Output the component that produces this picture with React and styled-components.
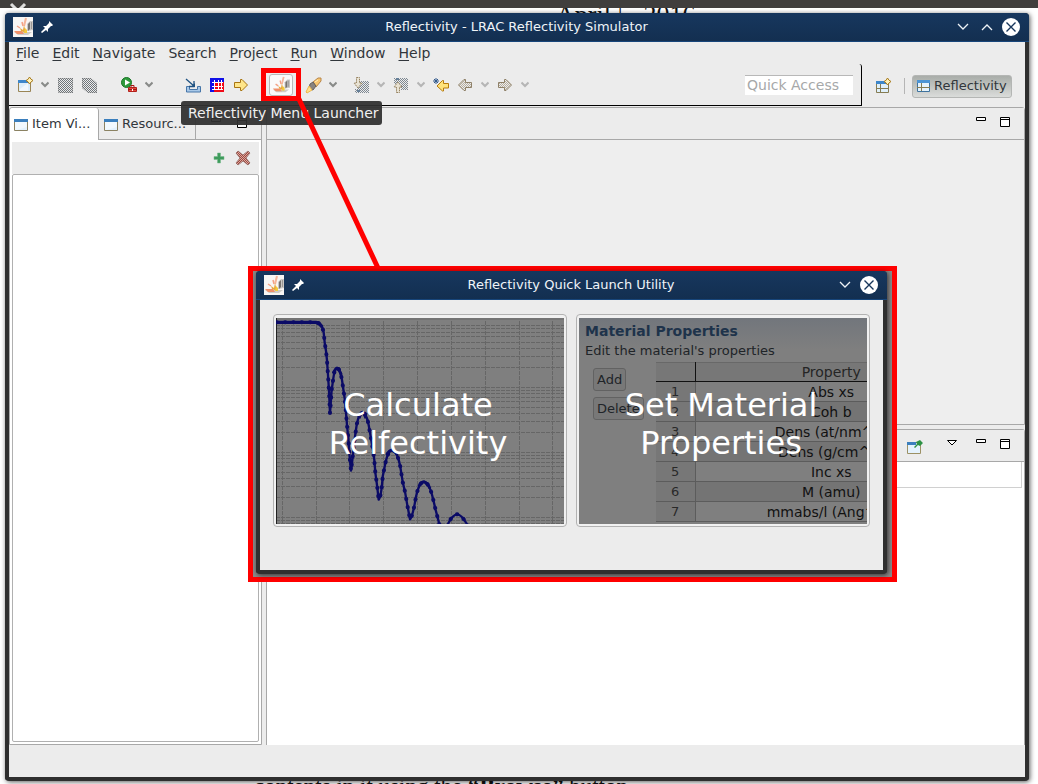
import React from "react";
import styled, { createGlobalStyle, css } from "styled-components";

const GlobalStyle = createGlobalStyle`
  *, *::before, *::after { box-sizing: border-box; }
  body { margin: 0; background: #fff; font-family: "DejaVu Sans", sans-serif; font-size: 13px; line-height: 18px; color: #31363b; }
  button, input, table { font: inherit; color: inherit; margin: 0; }
  button { padding: 0; border: 0; background: none; }
  svg { display: block; flex: none; }
`;

const Desktop = styled.div`
  position: relative;
  min-height: 100vh;
  display: flex;
  flex-direction: column;
  overflow: hidden;
`;
const TopBar = styled.div`
  position: relative;
  z-index: 1;
  height: 8px;
  background: #403e3d;
  overflow: hidden;
  padding-left: 9px;
`;
const PaperText = styled.div`
  position: absolute;
  left: ${(p) => p.$x}px;
  ${(p) => (p.$bottom ? "top: calc(100% - 9px);" : "top: 3px;")}
  font: ${(p) => (p.$bottom ? 23 : 26)}px/24px "Liberation Serif", serif;
  color: #111;
  white-space: nowrap;
`;
const Stage = styled.div`
  flex: 1;
  display: flex;
  padding: 5px 9px 3px 5px;
`;

const Window = styled.section`
  position: relative;
  flex: 1;
  min-width: 0;
  display: flex;
  flex-direction: column;
  background: #ececec;
  border: solid #2f2f2f;
  border-width: 0 4px 4px;
  border-radius: 4px;
  box-shadow: 1px 1px 5px rgba(0, 0, 0, 0.65);
`;
const TitleBar = styled.header`
  height: 29px;
  margin: 0 -4px;
  padding: 0 9px 0 8px;
  display: grid;
  grid-template-columns: 1fr auto 1fr;
  align-items: center;
  color: #eff4f8;
  background: linear-gradient(#17375e, #132f50);
  border-bottom: 1px solid #17457a;
  border-radius: 4px 4px 0 0;
`;
const TitleSide = styled.div`
  display: flex;
  align-items: center;
  justify-content: ${(p) => (p.$end ? "flex-end" : "flex-start")};
  gap: ${(p) => (p.$end ? 6 : 8)}px;
`;
const PlainButton = styled.button`
  display: flex;
  align-items: center;
  justify-content: center;
  width: ${(p) => p.$w || 16}px;
  height: ${(p) => p.$h || 18}px;
`;

const MenuBar = styled.nav`
  height: 22px;
  padding: 2px 7px;
  display: flex;
  gap: 13px;
  font-size: 14px;
`;
const MenuItem = styled.button`
  height: 18px;
  u { text-underline-offset: 2px; text-decoration-thickness: 1px; }
`;

const ToolRow = styled.div`
  height: 42px;
  display: flex;
`;
const Tools = styled.div`
  flex: 1;
  min-width: 0;
  display: flex;
  align-items: center;
  padding: 0 8px;
  border: solid #000;
  border-width: 0 1px 1px 0;
  border-radius: 0 3px 1px 0;
`;
const ToolGroup = styled.div`
  display: flex;
  align-items: center;
  gap: 8px;
  margin-left: ${(p) => p.$before || 0}px;
`;
const QuickAccess = styled.input`
  width: 108px;
  height: 20px;
  margin-left: auto;
  padding: 0 2px;
  border: 0;
  border-top: 1px solid #b8b8b8;
  background: #fff;
  font-size: 14px;
  &::placeholder { color: #a6a8a9; opacity: 1; }
`;
const Perspectives = styled.div`
  display: flex;
  align-items: center;
  padding: 2px 13px 0;
`;
const Divider = styled.span`
  width: 1px;
  height: 16px;
  margin: 0 7px 0 13px;
  background: #b5b5b5;
`;
const PerspectiveButton = styled.button`
  display: flex;
  align-items: center;
  gap: 3px;
  width: 100px;
  height: 23px;
  padding: 0 2px;
  border: 1px solid #b4b6b4;
  border-radius: 3px;
  background: linear-gradient(#a9ada9, #dadcda);
`;
const LaunchWrap = styled.div`
  position: relative;
  width: 24px;
  height: 22px;
  margin: 0 12px 0 20px;
`;
const LaunchButton = styled.button`
  width: 24px;
  height: 22px;
  display: flex;
  align-items: center;
  justify-content: center;
  border: 1px solid #b9b9b9;
  border-radius: 3px;
  background: #fafafa;
`;
const Highlight = styled.span`
  position: absolute;
  inset: -6px -8px -5px;
  border: 5px solid #f00;
  pointer-events: none;
`;
const Tooltip = styled.div`
  position: absolute;
  z-index: 2;
  left: -88px;
  top: 27px;
  width: 201px;
  height: 24px;
  padding: 3px 7px;
  border-radius: 3px;
  background: rgba(49, 49, 49, 0.94);
  color: #f0f0f0;
  font-size: 14px;
  line-height: 18px;
  white-space: nowrap;
`;

const Workbench = styled.main`
  flex: 1;
  min-height: 0;
  display: flex;
  gap: 4px;
  padding: 1px 0 0;
`;
const edge = "1px solid #a8a8a8";
const LeftView = styled.section`
  flex: 0 0 253px;
  display: flex;
  flex-direction: column;
  border: ${edge};
  border-radius: 3px 3px 0 0;
`;
const Tabs = styled.div`
  height: 32px;
  display: flex;
  padding-right: 13px;
`;
const Tab = styled.button`
  display: flex;
  align-items: center;
  gap: 3px;
  width: ${(p) => (p.$active ? 89 : 97)}px;
  padding: 0 4px 0 3px;
  border-right: ${edge};
  ${(p) =>
    p.$active
      ? css`background: #fff; border-radius: 3px 3px 0 0;`
      : css`border-bottom: ${edge}; padding-left: 4px;`}
`;
const TabRest = styled.div`
  flex: 1;
  display: flex;
  justify-content: flex-end;
  gap: 14px;
  padding-top: 9px;
  border-bottom: ${edge};
  margin-right: -13px;
  padding-right: 13px;
`;
const ViewBody = styled.div`
  flex: 1;
  display: flex;
  flex-direction: column;
  padding: 2px;
  background: #fff;
`;
const ViewTools = styled.div`
  height: 32px;
  display: flex;
  align-items: center;
  justify-content: flex-end;
  gap: 8px;
  padding-right: 8px;
  background: #ececec;
`;
const Tree = styled.div`
  flex: 1;
  border: 1px solid #b0b0b0;
  border-radius: 2px;
  background: #fff;
`;
const RightColumn = styled.div`
  flex: 1;
  min-width: 0;
  display: flex;
  flex-direction: column;
  gap: 4px;
`;
const Pane = styled.section`
  flex: 1;
  display: flex;
  flex-direction: column;
  border: ${edge};
  border-bottom-width: ${(p) => (p.$white ? 0 : 1)}px;
  border-radius: 0 3px 0 0;
  background: ${(p) => (p.$white ? "#fff" : "#eee")};
`;
const PaneHead = styled.header`
  height: 32px;
  display: flex;
  justify-content: flex-end;
  gap: 12px;
  padding: 8px 13px 0;
  border-bottom: ${edge};
  background: #ececec;
`;
const PaneStrip = styled.div`
  height: 26px;
  margin-right: 2px;
  border: solid #d0d0d0;
  border-width: 0 1px 1px 0;
`;
const StatusBar = styled.footer`
  height: 32px;
`;

const RedLine = styled.svg`
  position: absolute;
  z-index: 3;
  left: 290px;
  top: 90px;
  pointer-events: none;
`;
const Callout = styled.div`
  position: absolute;
  z-index: 4;
  left: 248px;
  top: 266px;
  width: 649px;
  display: flex;
  padding: 0 5px 3px 3px;
  border: 5px solid #f00;
  background: #8b8989;
`;
const DialogBody = styled.div`
  display: grid;
  grid-template-columns: repeat(2, minmax(0, 1fr));
  gap: 9px;
  padding: 14px 13px 43px;
`;
const Card = styled.article`
  position: relative;
  height: 213px;
  padding: 3px 2px 2px;
  border: 1px solid #b2b2b2;
  border-radius: 4px;
  background: #f1f1f1;
`;
const Preview = styled.div`
  height: 206px;
  overflow: hidden;
  background: #7f7f7f;
`;
const CardButton = styled.button`
  position: absolute;
  inset: 0;
  display: flex;
  align-items: center;
  justify-content: center;
  padding: 6px 4px 0 0;
  color: #fff;
  font-size: 32px;
  line-height: 38px;
`;

const FormPreview = styled.div`
  padding: 4px 0 0 6px;
  background: linear-gradient(#72767c 0, #7f7f7f 32px);
  color: #202428;
  h2 { margin: 0; font-size: 14px; line-height: 19px; color: #1e334b; }
  p { margin: 0; line-height: 19px; }
`;
const FormRow = styled.div`
  display: flex;
  gap: 16px;
  padding: 2px 0 0 8px;
`;
const FormButtons = styled.div`
  flex: none;
  width: 47px;
  display: flex;
  flex-direction: column;
  align-items: flex-start;
  gap: 6px;
  padding-top: 6px;
`;
const FormButton = styled.button`
  height: 23px;
  padding: 0 3px;
  border: 1px solid #626262;
  border-radius: 3px;
  background: #787878;
  white-space: nowrap;
`;
const PropTable = styled.table`
  flex: none;
  width: 312px;
  table-layout: fixed;
  border-collapse: collapse;
  color: #111;
  text-align: center;
  th, td {
    height: 20px;
    padding: 0;
    line-height: 18px;
    border-right: 1px solid #5c5c5c;
    border-bottom: 1px solid #5c5c5c;
    font-weight: 400;
  }
  td { font-size: 14px; }
  thead th {
    height: 19px;
    border-color: #111;
    border-top: 1px solid #686868;
    background: #777;
    color: #252525;
    font-size: 14px;
  }
  tbody th { background: #777; color: #292929; }
  tbody tr:nth-child(odd) td { background: #7f7f7f; }
  tbody tr:nth-child(even) td { background: #747474; }
`;

const AppLogo = ({ size = 20 }) => (
  <svg width={size} height={size} viewBox="0 0 20 20">
    <rect width="20" height="20" fill={size === 20 ? "#f8f6f4" : "none"} />
    <path d="M14 7l3-3h3v9l-6 1z" fill="#c9c7c5" />
    <path d="M15 7l2-2v7l-2 2z" fill="#77736f" />
    <path d="M18 5h1v7h-1z" fill="#9a9896" />
    <path d="M1 15h18l-4 3H5z" fill="#cfccc8" />
    <path d="M4 9l3 2M9 5l1 4" stroke="#f4a184" strokeWidth="1.500" fill="none" />
    <path d="M13 1l-2 8" stroke="#f6b59a" strokeWidth="2" />
    <path d="M1 14l8 0 2 3H4z" fill="#f0906a" />
    <path d="M8 14l-1-3 3 2 1-5 2 8z" fill="#e8a63d" />
    <path d="M11 16l1-5 2 2v3z" fill="#f3cc3b" />
  </svg>
);
const Pin = () => (
  <svg width="12" height="12" viewBox="0 0 12 12" fill="#fff">
    <path d="M8 0l4 4-1 1-1 0-3 3 0 3-2-2-4 3-1-1 4-4-2-2 3 0 3-3z" />
  </svg>
);
const TitleChevron = ({ up }) => (
  <svg width="12" height="8" viewBox="0 0 12 8" fill="none" stroke="#eef3f7" strokeWidth="1.3">
    <path d={up ? "M1 7l5-5 5 5" : "M1 1l5 5 5-5"} />
  </svg>
);
const CloseIcon = () => (
  <svg width="18" height="18" viewBox="0 0 18 18">
    <circle cx="9" cy="9" r="9" fill="#fff" />
    <path d="M4.5 4.5l9 9m0-9l-9 9" stroke="#17355a" strokeWidth="1.4" />
  </svg>
);
const Chevron = ({ dim }) => (
  <svg width="8" height="16" viewBox="0 0 8 16" fill="none" stroke={dim ? "#b5b5b5" : "#888a88"} strokeWidth="2">
    <path d="M.5 5.500L4 9l3.500-3.500" />
  </svg>
);

const Dither = ({ id, color }) => (
  <pattern id={id} width="2" height="2" patternUnits="userSpaceOnUse">
    <path d="M0 0h1v1H0zM1 1h1v1H1z" fill={color} />
  </pattern>
);
const Spark = ({ x, y }) => (
  <path transform={`translate(${x} ${y})`} d="M3.500 0L5 2.200 7 3.500 5 5 3.500 7 2.200 5 0 3.500 2.200 2.200z" fill="#fff3ba" stroke="#a87b1c" />
);
const ARROW = "M1.500 5.500h6v-3h1.500L14.500 8 9 13.500H7.500v-3h-6z";
const ARROW_LEFT = "M14.500 5.500h-6v-3H7L1.500 8 7 13.500h1.500v-3h6z";

const drawings = {
  newItem: (
    <>
      <path d="M1.500 3.500h12v11h-12z" fill="#dceefb" stroke="#9a8555" />
      <path d="M1 3h11v3H1z" fill="#3d87cb" />
      <path d="M3 12l8-6v8H3z" fill="#fff" opacity=".6" />
      <Spark x="9" y="0" />
    </>
  ),
  save: (
    <>
      <Dither id="ds" color="#6f757a" />
      <path d="M1 1h15v15H2l-1-1z" fill="url(#ds)" />
      <path d="M1.500 1.500h14v14h-14z" fill="none" stroke="#777" opacity=".35" />
    </>
  ),
  saveAll: (
    <>
      <Dither id="dsa" color="#6f757a" />
      <path d="M1 1h9l6 5v10H7l-6-5z" fill="url(#dsa)" />
      <path d="M1.500 1.500h8l6 5v9H7l-5.500-5z" fill="none" stroke="#777" opacity=".35" />
    </>
  ),
  run: (
    <>
      <circle cx="5.500" cy="5.500" r="5" fill="#2f9a3c" stroke="#187526" />
      <path d="M4 2.500l5 3-5 3z" fill="#fff" />
      <path d="M7.500 10.500h8v4h-8z" fill="#e24b40" stroke="#b3201b" />
      <path d="M10 10V8.500h3V10M7 12.500h9" fill="none" stroke="#a31714" />
      <path d="M11 12h1v2h-1z" fill="#fff" />
    </>
  ),
  download: (
    <>
      <path d="M1.500 9.500V15h14V9.500h-3v3h-8v-3z" fill="#a8c8e8" stroke="#4776a9" />
      <path d="M1 2l8 7M9 4v5.500H4" fill="none" stroke="#1f5282" strokeWidth="1.300" />
      <path d="M10 10h-4l4-4z" fill="#1f5282" />
    </>
  ),
  grid: (
    <>
      <path d="M1 1h14v14H1z" fill="#f00a18" />
      <path d="M1 1h14v4H5v10H1z" fill="#1010e8" />
      <path d="M5.500 3v10M9.500 3v10M12.500 3v10M3 5.500h11M3 9.500h11M3 12.500h11" stroke="#fff" />
    </>
  ),
  arrow: <path d={ARROW} fill="#ffe68a" stroke="#a77413" />,
  rocket: (
    <>
      <path d="M8 5l5-4h3v3l-5 6z" fill="#f9c66f" stroke="#b8864a" />
      <path d="M5 7l3-2 3 4-3 4-4-1z" fill="#89837f" stroke="#66605c" />
      <path d="M4 9l3 4-5 3-1-1z" fill="#ffe28a" stroke="#edb84e" />
      <path d="M10 5l3-2" stroke="#fff0bf" />
    </>
  ),
  nextNote: (
    <>
      <Dither id="dn" color="#7d8791" />
      <path d="M4 4h12v12H2V12h2z" fill="url(#dn)" />
      <path d="M3.500.5h3V6H9L5 11 1 6h2.500z" fill="#e9e3d4" stroke="#968361" strokeDasharray="1.500 .7" />
      <path d="M4 13h3v2H4z" fill="#657f98" />
    </>
  ),
  prevNote: (
    <>
      <Dither id="dp" color="#7d8791" />
      <path d="M1 1h14v12H8V7H1z" fill="url(#dp)" />
      <path d="M3.500 15.500h3V10H9L5 5 1 10h2.500z" fill="#e9e3d4" stroke="#968361" strokeDasharray="1.500 .7" />
      <path d="M3 1h3v2H3z" fill="#657f98" />
    </>
  ),
  backStar: (
    <>
      <path d="M15.500 6.500h-5v-3H9.500L4 9l5.500 5h1v-3h5z" fill="#ffe27a" stroke="#b67b0d" />
      <path d="M3 1v6M0 4h6M1 2l4 4m0-4L1 6" stroke="#31598c" />
    </>
  ),
  back: (
    <>
      <Dither id="db" color="#b6ad9e" />
      <path d={ARROW_LEFT} fill="url(#db)" stroke="#8f8168" />
    </>
  ),
  forward: (
    <>
      <Dither id="df" color="#b6ad9e" />
      <path d={ARROW} fill="url(#df)" stroke="#8f8168" />
    </>
  ),
  openPerspective: (
    <>
      <path d="M1.500 3.500h12v11h-12z" fill="#dff0fb" stroke="#867c52" />
      <path d="M1 3h10v3H1z" fill="#3d87cb" />
      <path d="M5.500 6v8M1 10.500h12" stroke="#867c52" />
      <Spark x="9" y="0" />
    </>
  ),
  perspective: (
    <>
      <path d="M2.500 2.500h12v11h-12z" fill="#e6f3fc" stroke="#3f739e" />
      <path d="M2 2h13v3H2z" fill="#4c94d4" />
      <path d="M6.500 5v8M7 9.500h8M2 9.500h5" stroke="#867c52" />
    </>
  ),
  view: (
    <>
      <path d="M1.500 3.500h13v11h-13z" fill="#e4f2fd" stroke="#8b8262" />
      <path d="M1 3h14v3H1z" fill="#3b7fbd" />
      <path d="M2 6h12v5L4 14H2z" fill="#fff" opacity=".5" />
    </>
  ),
  pinned: (
    <>
      <path d="M.500 3.500h13v11h-13z" fill="#e4f2fd" stroke="#9c9165" />
      <path d="M0 3h9v3H0z" fill="#3b7fbd" />
      <path d="M7 8l3-3-1-2 4-2 3 3-3 3-2-1-3 3z" fill="#2d9144" />
    </>
  ),
  add: <path d="M6.500 3h3v3.500H13v3H9.500V13h-3V9.500H3v-3h3.500z" fill="#3e9b5c" stroke="#77b98a" strokeWidth=".5" />,
  remove: (
    <>
      <Dither id="dr" color="#9b493f" />
      <path d="M1 3l2-2 5 4 5-4 2 2-4 5 4 5-2 2-5-4-5 4-2-2 4-5z" fill="#dda79f" />
      <path d="M1 3l2-2 5 4 5-4 2 2-4 5 4 5-2 2-5-4-5 4-2-2 4-5z" fill="url(#dr)" stroke="#8a625c" strokeWidth=".7" />
    </>
  ),
};
const Icon = ({ name }) => (
  <svg width="16" height="16" viewBox="0 0 16 16" overflow="visible">{drawings[name]}</svg>
);
const Tool = ({ name, label }) => (
  <PlainButton aria-label={label}><Icon name={name} /></PlainButton>
);
const Drop = ({ dim }) => (
  <PlainButton $w={8} aria-label="More choices"><Chevron dim={dim} /></PlainButton>
);
const PaneControls = () => (
  <>
    <PlainButton $w={12} $h={12} aria-label="Minimize">
      <svg width="12" height="12"><path d="M1.500 1.500h9v3h-9z" fill="#fff" stroke="#000" /></svg>
    </PlainButton>
    <PlainButton $w={12} $h={12} aria-label="Maximize">
      <svg width="12" height="12"><path d="M1.500 1.500h9v9h-9zM1 3.500h10" fill="#fff" stroke="#000" /></svg>
    </PlainButton>
  </>
);

const verticals = [6.5, 40.5, 73.5, 107.5, 141.5, 175.5, 209.5, 243.5, 276.5];
const horizontals = [];
[69, 134, 199, 264].forEach((base) => {
  for (let k = 1; k < 10; k += 1) {
    const y = Math.round(base - 65 * Math.log10(k)) + 0.5;
    if (y > 2 && y < 206) horizontals.push(y);
  }
});
const CURVE =
  "M110 202H228Q242 204 247 218L251 232 254 262 258 288 261 316 264 360 267 408 270 475 275 405 280 370Q284 338 291 338Q299 338 306 375L314 430 319 485 321 510 325 550 328 595 333 647 337 615 345 545 350 510Q358 471 367 471Q378 471 386 510L392 545 399 585 403 615 406 653 411 690 416 734Q424 725 428 665L435 630Q444 585 456 585Q470 586 480 630L488 680 495 710 501 745 510 793Q518 785 528 725Q538 680 552 680Q568 682 580 735L587 765 600 815M620 815Q636 778 652 778Q666 778 688 820";

const Chart = () => (
  <svg width="100%" height="206" viewBox="0 0 288 206" preserveAspectRatio="none">
    <rect width="288" height="206" fill="#7f7f7f" />
    <g stroke="#666" strokeDasharray="4 1">
      {verticals.map((x) => <path key={x} d={`M${x} 3V206`} />)}
      {horizontals.map((y) => <path key={y} d={`M0 ${y}H288`} />)}
    </g>
    <path d="M0 0H288V2H0z" fill="#747474" />
    <path d="M.5 0V206" stroke="#222" />
    <g transform="translate(-36 -63) scale(.33333)" fill="none" stroke="#0b0b66" strokeLinejoin="round">
      <path d={CURVE} strokeWidth="7" />
      <path d={CURVE} strokeWidth="12" strokeLinecap="round" strokeDasharray="1 24" />
      <path d="M110 202H228Q240 204 246 216" strokeWidth="10" />
      <path d="M280 355Q291 325 304 360M357 490Q367 460 378 490M440 600Q456 572 472 600M536 695Q552 665 570 700" strokeWidth="9" />
    </g>
  </svg>
);

const menus = [
  ["", "F", "ile"], ["", "E", "dit"], ["", "N", "avigate"], ["Se", "a", "rch"],
  ["", "P", "roject"], ["", "R", "un"], ["", "W", "indow"], ["", "H", "elp"],
];
const properties = ["Abs xs", "Coh b", "Dens (at/nm^3)", "Dens (g/cm^3)", "Inc xs", "M (amu)", "mmabs/l (Ang^-1)"];

const WindowTitle = ({ title, canMaximize }) => (
  <TitleBar>
    <TitleSide><AppLogo /><PlainButton $w={12} aria-label="Pin"><Pin /></PlainButton></TitleSide>
    <span>{title}</span>
    <TitleSide $end>
      <PlainButton $w={18} aria-label="Minimize window"><TitleChevron /></PlainButton>
      {canMaximize && <PlainButton $w={18} aria-label="Maximize window"><TitleChevron up /></PlainButton>}
      <PlainButton $w={18} aria-label="Close window"><CloseIcon /></PlainButton>
    </TitleSide>
  </TitleBar>
);

export default function App() {
  return (
    <Desktop>
      <GlobalStyle />
      <TopBar>
        <svg width="18" height="8"><path d="M2 4l7 7 7-7" fill="none" stroke="#ddd" strokeWidth="3" /></svg>
      </TopBar>
      <PaperText $x={556}>April 5, 2016</PaperText>
      <PaperText $bottom $x={254}>contents in it using the <b>“Browse”</b> button</PaperText>
      <Stage>
        <Window>
          <WindowTitle title="Reflectivity - LRAC Reflectivity Simulator" canMaximize />
          <MenuBar>
            {menus.map(([a, b, c]) => (
              <MenuItem key={b + c}>{a}<u>{b}</u>{c}</MenuItem>
            ))}
          </MenuBar>
          <ToolRow>
            <Tools>
              <ToolGroup>
                <Tool name="newItem" label="New" /><Drop />
                <Tool name="save" label="Save" /><Tool name="saveAll" label="Save all" />
              </ToolGroup>
              <ToolGroup $before={24}><Tool name="run" label="Run" /><Drop /></ToolGroup>
              <ToolGroup $before={32}>
                <Tool name="download" label="Import" /><Tool name="grid" label="Grid" /><Tool name="arrow" label="Go" />
              </ToolGroup>
              <LaunchWrap>
                <LaunchButton aria-label="Reflectivity launcher"><AppLogo size={18} /></LaunchButton>
                <Tooltip role="tooltip">Reflectivity Menu Launcher</Tooltip>
                <Highlight />
              </LaunchWrap>
              <ToolGroup><Tool name="rocket" label="Search" /><Drop /></ToolGroup>
              <ToolGroup $before={16}>
                <Tool name="nextNote" label="Next annotation" /><Drop dim />
                <Tool name="prevNote" label="Previous annotation" /><Drop dim />
                <Tool name="backStar" label="Last edit location" />
                <Tool name="back" label="Back" /><Drop dim />
                <Tool name="forward" label="Forward" /><Drop dim />
              </ToolGroup>
              <QuickAccess aria-label="Quick Access" placeholder="Quick Access" />
            </Tools>
            <Perspectives>
              <Tool name="openPerspective" label="Open perspective" />
              <Divider />
              <PerspectiveButton><Icon name="perspective" />Reflectivity</PerspectiveButton>
            </Perspectives>
          </ToolRow>
          <Workbench>
            <LeftView>
              <Tabs>
                <Tab $active><Icon name="view" />Item Vi...</Tab>
                <Tab><Icon name="view" />Resourc...</Tab>
                <TabRest><PaneControls /></TabRest>
              </Tabs>
              <ViewBody>
                <ViewTools><Tool name="add" label="Add item" /><Tool name="remove" label="Remove item" /></ViewTools>
                <Tree />
              </ViewBody>
            </LeftView>
            <RightColumn>
              <Pane><PaneHead><PaneControls /></PaneHead></Pane>
              <Pane $white>
                <PaneHead>
                  <Tool name="pinned" label="Pin view" />
                  <PlainButton $w={28} $h={12} aria-label="View menu">
                    <svg width="18" height="12"><path d="M7.500 2.500h9L12 7z" fill="#fff" stroke="#000" /></svg>
                  </PlainButton>
                  <PaneControls />
                </PaneHead>
                <PaneStrip />
              </Pane>
            </RightColumn>
          </Workbench>
          <StatusBar />
        </Window>
      </Stage>

      <RedLine width="100" height="180" viewBox="290 90 100 180">
        <path d="M298 97L378 268" stroke="#f00" strokeWidth="5" />
      </RedLine>

      <Callout>
        <Window role="dialog" aria-label="Reflectivity Quick Launch Utility">
          <WindowTitle title="Reflectivity Quick Launch Utility" />
          <DialogBody>
            <Card>
              <Preview><Chart /></Preview>
              <CardButton>Calculate<br />Relfectivity</CardButton>
            </Card>
            <Card>
              <Preview>
                <FormPreview>
                  <h2>Material Properties</h2>
                  <p>Edit the material's properties</p>
                  <FormRow>
                    <FormButtons>
                      <FormButton>Add</FormButton>
                      <FormButton>Delete</FormButton>
                    </FormButtons>
                    <PropTable>
                      <colgroup><col style={{ width: 39 }} /><col /></colgroup>
                      <thead><tr><th /><th>Property</th></tr></thead>
                      <tbody>
                        {properties.map((name, i) => (
                          <tr key={name}><th>{i + 1}</th><td>{name}</td></tr>
                        ))}
                      </tbody>
                    </PropTable>
                  </FormRow>
                </FormPreview>
              </Preview>
              <CardButton>Set Material<br />Properties</CardButton>
            </Card>
          </DialogBody>
        </Window>
      </Callout>
    </Desktop>
  );
}
